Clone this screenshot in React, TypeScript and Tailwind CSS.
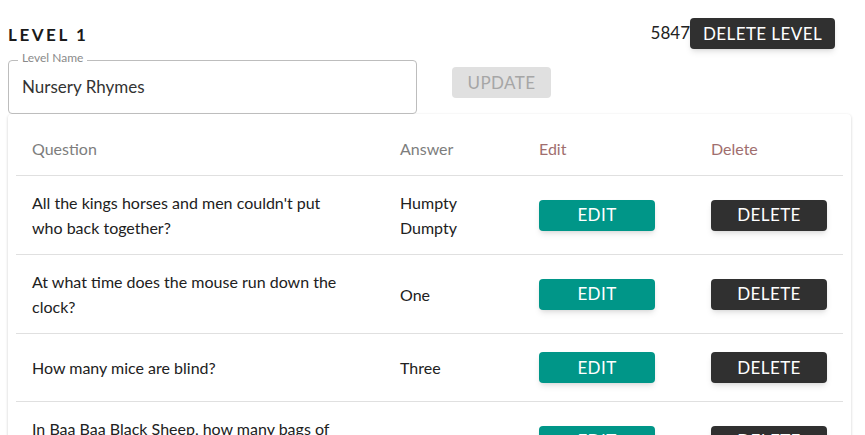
const rows = [
  { q: "All the kings horses and men couldn't put who back together?", a: "Humpty Dumpty" },
  { q: "At what time does the mouse run down the clock?", a: "One" },
  { q: "How many mice are blind?", a: "Three" },
  { q: "In Baa Baa Black Sheep, how many bags of wool were there?", a: "Three" },
];

const font = { fontFamily: "Lato, 'Open Sans', sans-serif" };

export default function App() {
  return (
    <div className="bg-white h-[435px] overflow-hidden text-[#212121]" style={font}>
      {/* Header */}
      <div className="flex items-start justify-between pl-2 pr-[30px] pt-[18px]">
        <h2 className="mt-[8px] text-[17px] font-bold tracking-[0.15em] leading-none text-[#1a1a1a]">
          LEVEL 1
        </h2>
        <div className="flex items-center">
          <span className="text-[17px] text-[#222] -mt-[2px]">5847</span>
          <button className="h-[31px] w-[145px] rounded bg-[#303030] text-[17px] tracking-wide text-white shadow-md">
            DELETE LEVEL
          </button>
        </div>
      </div>

      {/* Level name form */}
      <div className="flex items-start pl-2 mt-[11px]">
        <div className="relative h-[54px] w-[409px] rounded border border-[#bdbdbd]">
          <span className="absolute -top-[9px] left-[9px] bg-white px-[4px] text-[12px] leading-none text-[#8a8a8a]">
            Level Name
          </span>
          <div className="flex h-full items-center px-[13px] text-[17px] text-[#333]">Nursery Rhymes</div>
        </div>
        <button
          disabled
          className="ml-[35px] mt-[7px] h-[31px] w-[99px] rounded bg-[#e0e0e0] text-[17px] tracking-wide text-[#a6a6a6]"
        >
          UPDATE
        </button>
      </div>

      {/* Questions table */}
      <div className="ml-2 mr-[14px] rounded bg-white px-2 pt-2 shadow-[0_1px_3px_rgba(0,0,0,0.2)]">
        <table className="w-full border-collapse text-left text-[16px]">
          <thead>
            <tr className="border-b border-[#e0e0e0]">
              <th className="w-[368px] px-4 py-[14px] font-normal leading-[25px] text-[#7d7d7d]">Question</th>
              <th className="w-[139px] px-4 py-[14px] font-normal leading-[25px] text-[#7d7d7d]">Answer</th>
              <th className="w-[172px] px-4 py-[14px] font-normal leading-[25px] text-[#a06e6e]">Edit</th>
              <th className="px-4 py-[14px] font-normal leading-[25px] text-[#a06e6e]">Delete</th>
            </tr>
          </thead>
          <tbody>
            {rows.map((r, i) => (
              <tr key={i} className="border-b border-[#e0e0e0]">
                <td className="px-4 py-[14px] leading-[25px]">
                  <div className="max-w-[310px]">{r.q}</div>
                </td>
                <td className="px-4 py-[14px] leading-[25px]">
                  <div className="w-[70px]">{r.a}</div>
                </td>
                <td className="px-4 py-[14px]">
                  <button className="my-1 h-[31px] w-[116px] rounded bg-[#009688] text-[17px] tracking-wide text-white shadow-md">
                    EDIT
                  </button>
                </td>
                <td className="px-4 py-[14px]">
                  <button className="my-1 h-[31px] w-[116px] rounded bg-[#303030] text-[17px] tracking-wide text-white shadow-md">
                    DELETE
                  </button>
                </td>
              </tr>
            ))}
          </tbody>
        </table>
      </div>
    </div>
  );
}
